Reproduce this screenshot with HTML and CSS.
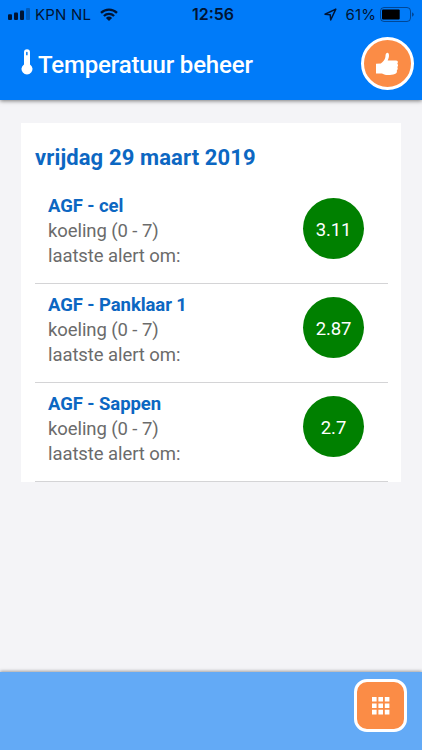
FILE: index.html
```html
<!DOCTYPE html>
<html lang="nl">
<head>
    <meta charset="UTF-8">
    <meta name="viewport" content="width=device-width, initial-scale=1.0">
    <title>Temperatuur beheer</title>
    <link rel="stylesheet" href="styles.css">
</head>
<body>
    <header class="header">
        <div class="statusbar">
            <div class="status-left">
                <svg class="signal" width="22" height="12" viewBox="0 0 22 12">
                    <rect x="0" y="6.3" width="4" height="5.7" rx="1"/>
                    <rect x="6" y="4.6" width="4" height="7.4" rx="1"/>
                    <rect x="12" y="2.4" width="4" height="9.6" rx="1"/>
                    <rect x="18" y="0" width="4" height="12" rx="1" opacity="0.3"/>
                </svg>
                <span class="carrier">KPN NL</span>
                <svg class="wifi" width="18" height="13" viewBox="0 0 18 13">
                    <path d="M1 4.9a11.5 11.5 0 0 1 16 0M3.9 8a7.3 7.3 0 0 1 10.2 0" fill="none" stroke="#001433" stroke-width="2.3"/>
                    <path d="M5.9 9.9a4.5 4.5 0 0 1 6.2 0L9 13z"/>
                </svg>
            </div>
            <span class="clock">12:56</span>
            <div class="status-right">
                <svg class="location" width="13" height="13" viewBox="0 0 13 13">
                    <path d="M11.8 1.1L1 6.2l5.2.6.5 5.2z" fill="none" stroke="#001433" stroke-width="1.5" stroke-linejoin="round"/>
                </svg>
                <span class="percent">61%</span>
                <svg class="battery" width="34" height="15" viewBox="0 0 34 15">
                    <rect x="0.5" y="0.5" width="30" height="14" rx="3.5" fill="none" stroke="#001433" stroke-opacity="0.5"/>
                    <rect x="2" y="2.5" width="17.7" height="10" rx="1" fill="#000"/>
                    <path d="M32 5.2q1.8.8 1.8 2.3T32 9.8z" opacity="0.5"/>
                </svg>
            </div>
        </div>
        <div class="titlebar">
            <svg class="thermometer" width="12" height="26" viewBox="0 0 12 26">
                <path fill-rule="evenodd" d="M3 3.2a3 3 0 0 1 6 0v12.2a5.5 5.5 0 1 1-6 0zM5.1 3.6v2.6h1.5V3.6a.75.75 0 0 0-1.5 0z"/>
            </svg>
            <h1>Temperatuur beheer</h1>
            <button class="btn-status" type="button" aria-label="Status">
                <svg width="23" height="24" viewBox="0 0 23 24">
                    <path d="M0 11.8l4.8-.4c2-1.2 4.2-3.6 4.6-6.4.1-2.4.3-3.7 1.4-4.1 1.4-.4 2.3.8 2.2 2.8-.1 2-.9 3.6-1.3 4.9h8.1c2.2 0 2.7 1.9 1.5 3.1 1.1.9.9 2.5 0 3.4.8 1.1.5 2.6-.5 3.3.5 1.7-.3 3-2 3.6-3.1 1.1-7.2 1.5-9.9.7-1.5-.4-2.3-1.1-3.9-1.1H0z"/>
                </svg>
            </button>
        </div>
    </header>

    <main>
        <section class="card">
            <h2>vrijdag 29 maart 2019</h2>
            <ul class="sensors">
                <li class="sensor">
                    <div class="info">
                        <h3>AGF - cel</h3>
                        <p>koeling (0 - 7)</p>
                        <p>laatste alert om:</p>
                    </div>
                    <span class="temp">3.11</span>
                </li>
                <li class="sensor">
                    <div class="info">
                        <h3>AGF - Panklaar 1</h3>
                        <p>koeling (0 - 7)</p>
                        <p>laatste alert om:</p>
                    </div>
                    <span class="temp">2.87</span>
                </li>
                <li class="sensor">
                    <div class="info">
                        <h3>AGF - Sappen</h3>
                        <p>koeling (0 - 7)</p>
                        <p>laatste alert om:</p>
                    </div>
                    <span class="temp">2.7</span>
                </li>
            </ul>
        </section>
    </main>

    <footer class="footer">
        <button class="btn-menu" type="button" aria-label="Menu">
            <svg width="18" height="18" viewBox="0 0 18 18">
                <path d="M0 0h4.6v4.6H0zM6.4 0H11v4.6H6.4zM12.8 0h4.6v4.6h-4.6zM0 6.4h4.6V11H0zM6.4 6.4H11V11H6.4zM12.8 6.4h4.6V11h-4.6zM0 12.8h4.6v4.6H0zM6.4 12.8H11v4.6H6.4zM12.8 12.8h4.6v4.6h-4.6z"/>
            </svg>
        </button>
    </footer>
</body>
</html>
```
FILE: styles.css
```css
* {
    box-sizing: border-box;
}
body {
    display: flex;
    flex-direction: column;
    height: 100vh;
    margin: 0;
    font-family: Roboto, sans-serif;
    color: #6b6b6b;
    background-color: #f4f4f7;
}
h1, h2, h3, p, ul {
    margin: 0;
    padding: 0;
}
svg {
    display: block;
    flex-shrink: 0;
}
button {
    display: flex;
    align-items: center;
    justify-content: center;
    width: 53px;
    height: 53px;
    padding: 0;
    border: 3px solid #fff;
    background-color: #fb8c46;
}
button svg {
    fill: #fff;
}

/* header */
.header {
    height: 100px;
    background-color: #007bf9;
    box-shadow: 0 1px 4px rgba(0, 0, 0, 0.5);
}
.statusbar {
    display: grid;
    grid-template-columns: 1fr auto 1fr;
    align-items: center;
    height: 28px;
    padding: 0 8px;
    font-family: Inter, sans-serif;
    font-size: 15px;
    color: #001433;
    fill: #001433;
}
.status-left,
.status-right {
    display: flex;
    align-items: center;
}
.status-right {
    justify-content: flex-end;
}
.carrier {
    margin: 0 9px 0 5px;
    letter-spacing: 0.2px;
}
.clock {
    padding-left: 4px;
    font-size: 16px;
    font-weight: 600;
}
.percent {
    margin: 0 4px 0 9px;
    letter-spacing: 0.1px;
}
.titlebar {
    display: flex;
    align-items: center;
    height: 72px;
    padding: 0 8px 0 21px;
}
.thermometer {
    margin: -5px 5px 0 0;
    fill: #fff;
}
.titlebar h1 {
    padding-top: 2px;
    font-size: 24px;
    font-weight: 500;
    letter-spacing: -0.16px;
    color: #fff;
}
.btn-status {
    margin: -1px 0 0 auto;
    border-radius: 50%;
}

/* content */
main {
    flex: 1;
    padding: 23px 21px 0;
}
.card {
    padding: 0 13px 0 14px;
    background-color: #fff;
}
.card h2 {
    height: 62px;
    padding-top: 22px;
    font-size: 22px;
    font-weight: 700;
    line-height: 26px;
    letter-spacing: 0.12px;
    color: #0c67c2;
}
.sensors {
    list-style: none;
}
.sensor {
    display: flex;
    justify-content: space-between;
    height: 99px;
    padding: 9px 24px 0 13px;
    border-bottom: 1px solid #d4d4d6;
    font-size: 18.5px;
    line-height: 25px;
    letter-spacing: -0.08px;
}
.sensor h3 {
    font-size: 18.5px;
    font-weight: 700;
    color: #0c67c2;
}
.temp {
    width: 61px;
    height: 61px;
    margin-top: 4px;
    border-radius: 50%;
    background-color: #008000;
    color: #fff;
    line-height: 65px;
    text-align: center;
}

/* footer */
.footer {
    display: flex;
    justify-content: flex-end;
    height: 78px;
    padding: 7px 15px 0 0;
    background-color: #63aaf6;
    box-shadow: 0 -1px 3px rgba(0, 0, 0, 0.35);
}
.btn-menu {
    border-radius: 13px;
}
```
